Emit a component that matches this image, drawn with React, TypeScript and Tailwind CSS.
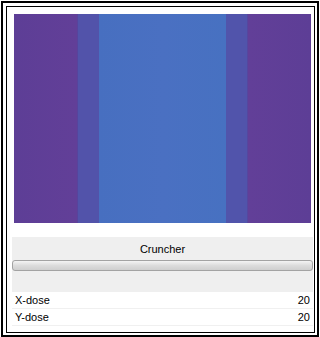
export default function App() {
  return (
    <div className="w-[320px] h-[337px] bg-white pl-px pt-px font-['Liberation_Sans',Arial,sans-serif] text-[11px] text-black">
      <div className="w-[318px] h-[336px] border-2 border-black pl-[3px] pt-[3px] pr-[2px] pb-[2px]">
        <div className="h-full border border-black bg-white flex flex-col">
          <div className="pl-[7px] pr-[3px] pt-[7px]">
            <div className="h-[209px] flex">
              <div className="w-[63px] bg-gradient-to-r from-[#5d3e96] to-[#623f98]" />
              <div className="w-[22px] bg-[#5253aa] border-l border-[#57449c]" />
              <div className="w-[127px] bg-gradient-to-r from-[#476fc0] via-[#4a70c2] to-[#4771c1]" />
              <div className="w-[22px] bg-[#5154ab] border-r border-[#56479f]" />
              <div className="flex-1 bg-gradient-to-r from-[#623f98] to-[#5d3e96]" />
            </div>
          </div>
          <div className="ml-[5px] mr-px mt-[14px] bg-[#efefef] h-[55px] flex flex-col">
            <div className="h-[23px] flex items-center justify-center pt-px">Cruncher</div>
            <div className="h-[11px] rounded-[3px] border border-[#a3a3a3] bg-gradient-to-b from-[#f4f4f4] via-[#dcdcdc] to-[#cfcfcf]" />
          </div>
          <div className="ml-[5px] mr-px">
            <div className="h-[17px] flex items-center justify-between px-[3px] border-b border-[#f0f0f0]">
              <span>X-dose</span>
              <span>20</span>
            </div>
            <div className="h-[17px] flex items-center justify-between px-[3px] border-b border-[#f0f0f0]">
              <span>Y-dose</span>
              <span>20</span>
            </div>
          </div>
        </div>
      </div>
    </div>
  );
}
